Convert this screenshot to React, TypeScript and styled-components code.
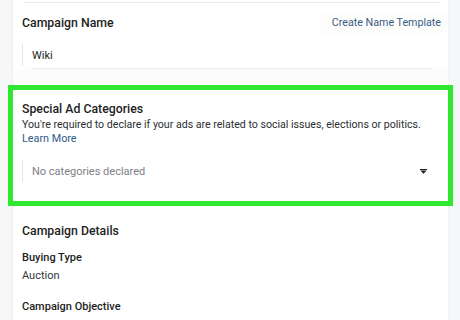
import React from "react";
import styled, { createGlobalStyle } from "styled-components";

const Global = createGlobalStyle`
  html, body { margin: 0; padding: 0; background: #f6f7f8; }
  body { font-family: Roboto, "Liberation Sans", sans-serif; color: #1c1e21; }
  * { box-sizing: border-box; }
`;

const Page = styled.div`
  width: 460px;
  height: 320px;
  overflow: hidden;
  padding-left: 12px;
`;

const Card = styled.div`
  background: #fff;
  border-left: 1px solid #ededed;
  border-right: 1px solid #f3f3f3;
  width: 437px;
  min-height: 340px;
`;

const TopRule = styled.div`
  height: 3px;
  margin: 0 8px 0 11px;
  border-bottom: 1px solid #e9eaeb;
`;

const Section = styled.section`
  padding: 10px 0 0 9px;
`;

const HeaderRow = styled.div`
  display: flex;
  justify-content: space-between;
  align-items: center;
  height: 20px;
  padding-right: 1px;
`;

const Title = styled.div<{ $lh?: number }>`
  font-size: 12.3px;
  font-weight: 500;
  line-height: ${(p) => p.$lh ?? 20}px;
`;

const TemplateButton = styled.button`
  font: inherit;
  font-size: 10.7px;
  color: #3b5c86;
  background: #fdfdfc;
  border: none;
  padding: 2px 6px 2px 12px;
  line-height: 18px;
`;

const Field = styled.div<{ $top: number; $right: number }>`
  margin-top: ${(p) => p.$top}px;
  margin-right: ${(p) => p.$right}px;
  display: flex;
  flex-direction: column;
`;

const InputBox = styled.div<{ $muted?: boolean }>`
  border-left: 1px solid #e4e5e6;
  height: 22px;
  display: flex;
  align-items: center;
  justify-content: space-between;
  padding: 0 0 0 9px;
  font-size: 11px;
  color: ${(p) => (p.$muted ? "#7d8086" : "#1c1e21")};
`;

const Underline = styled.div`
  height: 1px;
  background: #e8e9ea;
  margin: 2px 0 0 10px;
`;

const Gap = styled.div`
  height: 16px;
  background: #fcfcfc;
`;

const Highlight = styled.section`
  margin-left: -5px;
  width: 445px;
  border: 5px solid #2fe82f;
  padding: 11px 0 19px 9px;
  background: #fff;
`;

const Desc = styled.div`
  font-size: 10.6px;
  line-height: 14px;
  color: #2b2d31;
`;

const Link = styled.a`
  display: block;
  font-size: 10.8px;
  line-height: 14px;
  color: #2f5a8a;
  text-decoration: none;
`;

const Caret = styled.svg`
  width: 7px;
  height: 5px;
`;

const Details = styled.section`
  padding: 15px 0 0 9px;
`;

const Label = styled.div<{ $top: number }>`
  font-size: 11px;
  font-weight: 500;
  line-height: 16px;
  margin-top: ${(p) => p.$top}px;
`;

const Value = styled.div`
  font-size: 11px;
  line-height: 20px;
  color: #33363a;
`;

export default function App() {
  return (
    <>
      <Global />
      <Page>
        <Card>
          <TopRule />
          <Section>
            <HeaderRow>
              <Title>Campaign Name</Title>
              <TemplateButton>Create Name Template</TemplateButton>
            </HeaderRow>
            <Field $top={11} $right={16}>
              <InputBox>Wiki</InputBox>
              <Underline />
            </Field>
          </Section>
          <Gap />
          <Highlight>
            <Title $lh={17}>Special Ad Categories</Title>
            <Desc>You're required to declare if your ads are related to social issues, elections or politics.</Desc>
            <Link href="#">Learn More</Link>
            <Field $top={14} $right={21}>
              <InputBox $muted>
                <span>No categories declared</span>
                <Caret viewBox="0 0 7 5">
                  <rect x="0" y="0" width="7" height="1" fill="#1c1e21" />
                  <path d="M0.3 1.4 H6.7 L3.5 4.8 Z" fill="#1c1e21" />
                </Caret>
              </InputBox>
            </Field>
          </Highlight>
          <Details>
            <Title>Campaign Details</Title>
            <Label $top={9}>Buying Type</Label>
            <Value>Auction</Value>
            <Label $top={13}>Campaign Objective</Label>
            <Value>Brand awareness</Value>
          </Details>
        </Card>
      </Page>
    </>
  );
}
